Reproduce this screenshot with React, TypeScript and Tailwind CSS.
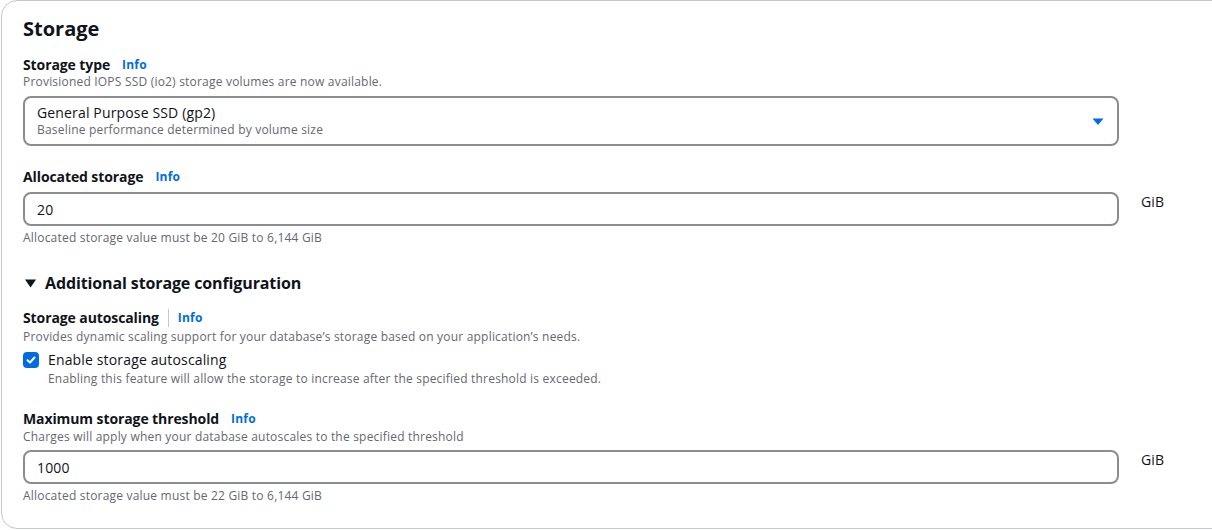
import React, { useState } from "react";

const font = { fontFamily: '"Open Sans", "Noto Sans", Arial, sans-serif' };

const Info: React.FC = () => (
  <a className="cursor-pointer text-[12px] font-bold leading-4 tracking-[0.2px] text-[#006ce0]">Info</a>
);

const Label: React.FC<{ text: string; divider?: boolean; className?: string }> = ({
  text,
  divider,
  className,
}) => (
  <div className={`flex items-center ${className ?? ""}`}>
    <span className="text-[14px] font-bold leading-[18px] tracking-[-0.1px] text-[#0f141a]">{text}</span>
    {divider ? (
      <span className="mx-[9px] h-[18px] w-px bg-[#c6c6cd]" />
    ) : (
      <span className="w-[12px]" />
    )}
    <Info />
  </div>
);

const Hint: React.FC<{ text: string; className?: string }> = ({ text, className }) => (
  <p className={`text-[12px] leading-4 tracking-[0.2px] text-[#656871] ${className ?? ""}`}>{text}</p>
);

const NumberField: React.FC<{ value: string }> = ({ value }) => (
  <div className="flex items-start">
    <div className="flex h-[34px] w-[1096px] items-center rounded-lg border-2 border-[#8c8c94] px-[12px] text-[14px] tracking-[0.15px] text-[#0f141a]">
      {value}
    </div>
    <span className="ml-[22px] pt-[1px] text-[14px] leading-[18px] tracking-[0.15px] text-[#0f141a]">GiB</span>
  </div>
);

export default function App() {
  const [autoscale, setAutoscale] = useState(true);

  return (
    <div className="h-[530px] w-[1212px] overflow-hidden bg-white" style={font}>
      <div className="ml-px w-[1240px] rounded-2xl border border-[#c6c6cd] bg-white px-[21px] pb-[24px] pt-[16px]">
        <h2 className="text-[20px] font-bold leading-6 text-[#0f141a]">Storage</h2>

        <Label text="Storage type" className="mt-[15px]" />
        <Hint text="Provisioned IOPS SSD (io2) storage volumes are now available." />
        <div className="mt-[6px] flex h-[50px] w-[1096px] items-center justify-between rounded-lg border-2 border-[#8c8c94] pl-[12px] pr-[13px]">
          <div>
            <div className="text-[14px] leading-[18px] tracking-[0.15px] text-[#0f141a]">General Purpose SSD (gp2)</div>
            <div className="text-[12px] leading-4 tracking-[0.2px] text-[#656871]">Baseline performance determined by volume size</div>
          </div>
          <svg width="12" height="8" viewBox="0 0 12 8" className="mt-[2px]">
            <path d="M0.5 0.5 L11.5 0.5 L6 7 Z" fill="#006ce0" />
          </svg>
        </div>

        <Label text="Allocated storage" className="mt-[22px]" />
        <div className="mt-[6px]">
          <NumberField value="20" />
        </div>
        <Hint text="Allocated storage value must be 20 GiB to 6,144 GiB" className="mt-[4px]" />

        <div className="mt-[27px] flex items-center gap-[9px]">
          <svg width="11" height="9" viewBox="0 0 11 9" className="ml-[2px]">
            <path d="M0 0.5 L11 0.5 L5.5 8.5 Z" fill="#0f141a" />
          </svg>
          <span className="text-[16px] font-bold leading-5 tracking-[-0.12px] text-[#0f141a]">Additional storage configuration</span>
        </div>

        <Label text="Storage autoscaling" divider className="mt-[16px]" />
        <Hint text="Provides dynamic scaling support for your database’s storage based on your application’s needs." className="mt-[2px]" />
        <div className="mt-[6px] flex items-start gap-[9px]">
          <button
            onClick={() => setAutoscale((v) => !v)}
            className={`mt-px flex h-4 w-4 items-center justify-center rounded-[4px] ${
              autoscale ? "bg-[#006ce0]" : "border-2 border-[#8c8c94] bg-white"
            }`}
          >
            {autoscale && (
              <svg width="12" height="12" viewBox="0 0 12 12">
                <path d="M2.5 6.2 L5 8.5 L9.5 3.5" stroke="white" strokeWidth="2" fill="none" strokeLinecap="round" strokeLinejoin="round" />
              </svg>
            )}
          </button>
          <div>
            <div className="text-[14px] leading-[18px] tracking-[0.15px] text-[#0f141a]">Enable storage autoscaling</div>
            <Hint text="Enabling this feature will allow the storage to increase after the specified threshold is exceeded." className="mt-[2px]" />
          </div>
        </div>

        <Label text="Maximum storage threshold" className="mt-[23px]" />
        <Hint text="Charges will apply when your database autoscales to the specified threshold" className="mt-px" />
        <div className="mt-[5px]">
          <NumberField value="1000" />
        </div>
        <Hint text="Allocated storage value must be 22 GiB to 6,144 GiB" className="mt-[4px]" />
      </div>
    </div>
  );
}
